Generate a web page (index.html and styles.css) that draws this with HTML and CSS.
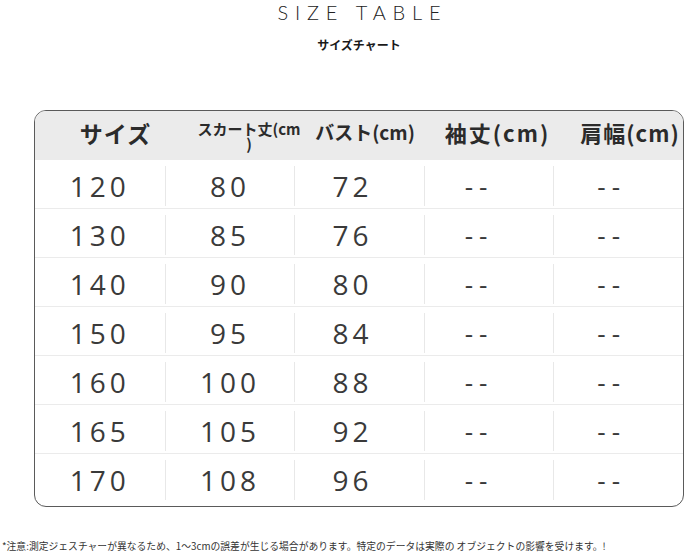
FILE: index.html
```html
<!DOCTYPE html>
<html lang="ja">
<head>
<meta charset="utf-8">
<link rel="stylesheet" href="styles.css">
</head>
<body>
<div class="wrap">
  <h1 class="title">SIZE TABLE</h1>
  <p class="subtitle">サイズチャート</p>
  <div class="table">
    <div class="head">
      <div class="h h1">サイズ</div>
      <div class="h h2">スカート丈(cm<br>)</div>
      <div class="h h3">バスト(cm)</div>
      <div class="h h4">袖丈(cm)</div>
      <div class="h h5">肩幅(cm)</div>
    </div>
    <div class="row"><div class="c">120</div><div class="c">80</div><div class="c">72</div><div class="c d">--</div><div class="c d">--</div></div>
    <div class="row"><div class="c">130</div><div class="c">85</div><div class="c">76</div><div class="c d">--</div><div class="c d">--</div></div>
    <div class="row"><div class="c">140</div><div class="c">90</div><div class="c">80</div><div class="c d">--</div><div class="c d">--</div></div>
    <div class="row"><div class="c">150</div><div class="c">95</div><div class="c">84</div><div class="c d">--</div><div class="c d">--</div></div>
    <div class="row"><div class="c">160</div><div class="c">100</div><div class="c">88</div><div class="c d">--</div><div class="c d">--</div></div>
    <div class="row"><div class="c">165</div><div class="c">105</div><div class="c">92</div><div class="c d">--</div><div class="c d">--</div></div>
    <div class="row last"><div class="c">170</div><div class="c">108</div><div class="c">96</div><div class="c d">--</div><div class="c d">--</div></div>
  </div>
</div>
<p class="note">*注意:測定ジェスチャーが異なるため、1～3cmの誤差が生じる場合があります。特定のデータは実際の オブジェクトの影響を受けます。!</p>
</body>
</html>
```
FILE: styles.css
```css
html, body {
  margin: 0;
  padding: 0;
  background: #fff;
}
body {
  width: 688px;
  height: 556px;
  overflow: hidden;
  font-family: "Noto Sans CJK JP", "Noto Sans", sans-serif;
  color: #2b2b2b;
}
.wrap {
  margin-left: 34px;
  width: 650px;
}
.title {
  margin: 0;
  text-align: center;
  font-family: "Lato", "Open Sans", sans-serif;
  font-weight: 300;
  font-size: 20px;
  line-height: 24px;
  letter-spacing: 0.34em;
  padding-left: 0.34em;
  color: #222;
}
.subtitle {
  margin: 13px 0 0;
  text-align: center;
  font-size: 12px;
  line-height: 16px;
  font-weight: 700;
  color: #1a1a1a;
}
.table {
  margin-top: 57px;
  border: 1px solid #5a5a5a;
  border-radius: 12px;
  overflow: hidden;
  height: 397px;
  box-sizing: border-box;
}
.head {
  display: grid;
  grid-template-columns: 161px 106px 126px 139px 1fr;
  height: 49px;
  box-sizing: border-box;
  padding-bottom: 8px;
  background: #ebebeb;
  align-items: center;
  font-weight: 700;
  color: #2b2b2b;
}
.h {
  text-align: center;
}
.h1 { font-size: 23px; letter-spacing: 1px; padding-top: 2px; }
.h2 { font-size: 15px; line-height: 15px; padding-top: 8px; }
.h3 { font-size: 19px; }
.h4 { font-size: 22px; letter-spacing: 2px; }
.h5 { font-size: 22px; letter-spacing: 1px; padding-left: 10px; }
.row {
  display: grid;
  grid-template-columns: repeat(5, 1fr);
  height: 49px;
  border-bottom: 1px solid #ebebeb;
  box-sizing: border-box;
}
.row.last { border-bottom: none; }
.c {
  margin: 6px 0 3px;
  text-align: center;
  font-family: "Open Sans", "Noto Sans", sans-serif;
  font-weight: 400;
  font-size: 28px;
  line-height: 40px;
  letter-spacing: 4px;
  color: #3a3a3a;
  border-left: 1px solid #e8e8e8;
}
.c:first-child { border-left: none; }
.c:nth-child(3) { padding-right: 14px; }
.d {
  letter-spacing: 6px;
  font-size: 26px;
  padding-right: 20px;
}
.d:last-child { padding-right: 14px; }
.note {
  margin: 33px 0 0 2px;
  font-size: 9.8px;
  line-height: 12px;
  color: #333;
  white-space: nowrap;
}
```
